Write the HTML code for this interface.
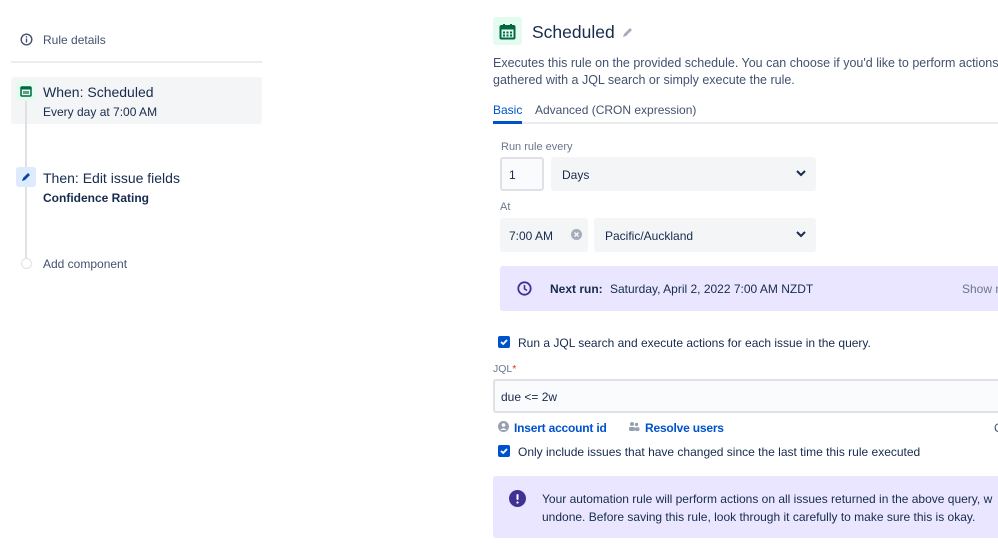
<!DOCTYPE html>
<html><head><style>
*{margin:0;padding:0;box-sizing:border-box}
body{width:998px;height:546px;overflow:hidden;background:#fff;font-family:"Liberation Sans",sans-serif;color:#172b4d;position:relative;font-size:13px}
.a{position:absolute;white-space:nowrap}
.box{position:absolute;background:#f4f5f7;border-radius:3px}
.chk{position:absolute;width:12px;height:12px;background:#0052cc;border-radius:2px}
.chk svg{position:absolute;left:1px;top:1px}
</style></head><body>
<svg class="a" style="left:20px;top:33px" width="13" height="13" viewBox="0 0 13 13"><circle cx="6.5" cy="6.5" r="5.3" fill="none" stroke="#42526e" stroke-width="1.4"/><rect x="5.8" y="5.5" width="1.4" height="4" fill="#42526e"/><rect x="5.8" y="3.2" width="1.4" height="1.4" fill="#42526e"/></svg>
<div class="a" style="left:43px;top:33px;font-size:12px;color:#42526e">Rule details</div>
<div class="a" style="left:11px;top:61px;width:251px;height:2px;background:#ebecf0"></div>
<div class="box" style="left:11px;top:77px;width:251px;height:47px"></div>
<div class="a" style="left:25px;top:100px;width:2px;height:158px;background:#dfe1e6"></div>
<div class="a" style="left:16px;top:81px;width:20px;height:20px;background:#e3fcef;border-radius:3px"></div>
<svg class="a" style="left:20px;top:85px" width="12" height="12" viewBox="0 0 12 12"><rect x="1" y="2" width="10" height="9" rx="1" fill="none" stroke="#006644" stroke-width="1.5"/><rect x="1" y="2" width="10" height="2.5" fill="#006644"/><rect x="3" y="6" width="6" height="3" fill="#006644" opacity=".6"/></svg>
<div class="a" style="left:43px;top:84px;font-size:14px">When: Scheduled</div>
<div class="a" style="left:43px;top:105px;font-size:12px;color:#172b4d">Every day at 7:00 AM</div>
<div class="a" style="left:16px;top:167px;width:20px;height:20px;background:#deebff;border-radius:3px"></div>
<svg class="a" style="left:20px;top:171px" width="12" height="12" viewBox="0 0 12 12"><path d="M2 10 L3 7 L8 2 L10 4 L5 9 Z" fill="#0747a6"/></svg>
<div class="a" style="left:43px;top:170px;font-size:14px">Then: Edit issue fields</div>
<div class="a" style="left:43px;top:191px;font-size:12px;font-weight:bold">Confidence Rating</div>
<div class="a" style="left:21px;top:258px;width:11px;height:11px;border:1px solid #dfe1e6;border-radius:50%;background:#fff"></div>
<div class="a" style="left:43px;top:257px;font-size:12px;color:#42526e">Add component</div>
<div class="a" style="left:493px;top:17px;width:29px;height:28px;background:#e3fcef;border-radius:3px"></div>
<svg class="a" style="left:499px;top:23px" width="17" height="17" viewBox="0 0 17 17"><rect x="1.5" y="3" width="14" height="12.5" rx="1" fill="none" stroke="#006644" stroke-width="2"/><rect x="1.5" y="3" width="14" height="3.5" fill="#006644"/><rect x="4" y="1" width="2" height="3" fill="#006644"/><rect x="11" y="1" width="2" height="3" fill="#006644"/><g fill="#006644"><rect x="4" y="8.5" width="2" height="2"/><rect x="7.5" y="8.5" width="2" height="2"/><rect x="11" y="8.5" width="2" height="2"/><rect x="4" y="11.5" width="2" height="2"/><rect x="7.5" y="11.5" width="2" height="2"/><rect x="11" y="11.5" width="2" height="2"/></g></svg>
<div class="a" style="left:532px;top:22px;font-size:17.5px">Scheduled</div>
<svg class="a" style="left:622px;top:26px" width="12" height="12" viewBox="0 0 12 12"><path d="M1 11 L2 8 L8 2 L10 4 L4 10 Z" fill="#a5adba"/></svg>
<div class="a" style="left:493px;top:56px;font-size:12.5px;color:#42526e">Executes this rule on the provided schedule. You can choose if you'd like to perform actions on</div>
<div class="a" style="left:493px;top:73px;font-size:12.5px;color:#42526e">gathered with a JQL search or simply execute the rule.</div>
<div class="a" style="left:493px;top:103px;font-size:12px;color:#0052cc">Basic</div>
<div class="a" style="left:535px;top:103px;font-size:12px;color:#42526e">Advanced (CRON expression)</div>
<div class="a" style="left:493px;top:122px;width:505px;height:2px;background:#ebecf0"></div>
<div class="a" style="left:493px;top:121px;width:29px;height:3px;background:#0052cc"></div>
<div class="a" style="left:501px;top:141px;font-size:11px;color:#6b778c">Run rule every</div>
<div class="a" style="left:500px;top:157px;width:44px;height:34px;border:2px solid #dfe1e6;border-radius:3px;background:#fafbfc"></div>
<div class="a" style="left:509px;top:168px;font-size:12px">1</div>
<div class="box" style="left:551px;top:157px;width:265px;height:34px"></div>
<div class="a" style="left:562px;top:168px;font-size:12px">Days</div>
<svg class="a" style="left:795px;top:169px" width="12" height="9" viewBox="0 0 12 9"><path d="M2 2 L6 6 L10 2" fill="none" stroke="#172b4d" stroke-width="2"/></svg>
<div class="a" style="left:500px;top:201px;font-size:11px;color:#6b778c">At</div>
<div class="box" style="left:500px;top:218px;width:88px;height:34px"></div>
<div class="a" style="left:509px;top:229px;font-size:12px">7:00 AM</div>
<svg class="a" style="left:571px;top:229px" width="11" height="11" viewBox="0 0 11 11"><circle cx="5.5" cy="5.5" r="5.5" fill="#a5adba"/><path d="M3.5 3.5 L7.5 7.5 M7.5 3.5 L3.5 7.5" stroke="#f4f5f7" stroke-width="1.5"/></svg>
<div class="box" style="left:594px;top:218px;width:222px;height:34px"></div>
<div class="a" style="left:605px;top:229px;font-size:12px">Pacific/Auckland</div>
<svg class="a" style="left:795px;top:230px" width="12" height="9" viewBox="0 0 12 9"><path d="M2 2 L6 6 L10 2" fill="none" stroke="#172b4d" stroke-width="2"/></svg>
<div class="a" style="left:500px;top:266px;width:498px;height:45px;background:#eae6ff;border-radius:3px 0 0 3px"></div>
<svg class="a" style="left:517px;top:281px" width="15" height="15" viewBox="0 0 15 15"><circle cx="7.5" cy="7.5" r="6.2" fill="none" stroke="#403294" stroke-width="1.8"/><path d="M7.5 4 V7.8 L10 9.5" fill="none" stroke="#403294" stroke-width="1.6"/></svg>
<div class="a" style="left:550px;top:282px;font-size:12px;font-weight:bold">Next run:</div>
<div class="a" style="left:610px;top:282px;font-size:12px">Saturday, April 2, 2022 7:00 AM NZDT</div>
<div class="a" style="left:962px;top:282px;font-size:12px;color:#6b778c">Show m</div>
<div class="chk" style="left:498px;top:336px"><svg width="10" height="10" viewBox="0 0 10 10"><path d="M2 5 L4.2 7 L8 3" fill="none" stroke="#fff" stroke-width="1.8"/></svg></div>
<div class="a" style="left:518px;top:336px;font-size:12px">Run a JQL search and execute actions for each issue in the query.</div>
<div class="a" style="left:493px;top:363px;font-size:10.5px;color:#6b778c">JQL<span style="color:#de350b">*</span></div>
<div class="a" style="left:493px;top:379px;width:510px;height:34px;border:2px solid #dfe1e6;border-radius:3px;background:#fafbfc"></div>
<div class="a" style="left:501px;top:390px;font-size:12px">due &lt;= 2w</div>
<svg class="a" style="left:498px;top:421px" width="11" height="11" viewBox="0 0 11 11"><circle cx="5.5" cy="5.5" r="5.5" fill="#97a0af"/><circle cx="5.5" cy="4" r="1.8" fill="#fff"/><path d="M2.3 9 Q5.5 5.5 8.7 9" fill="#fff"/></svg>
<div class="a" style="left:514px;top:421px;font-size:12px;color:#0052cc;font-weight:bold;letter-spacing:-0.2px">Insert account id</div>
<svg class="a" style="left:628px;top:421px" width="12" height="10" viewBox="0 0 12 10"><circle cx="4" cy="3" r="2" fill="#97a0af"/><circle cx="8.5" cy="3.5" r="1.7" fill="#97a0af"/><rect x="1" y="6" width="6" height="4" rx="1.5" fill="#97a0af"/><rect x="7" y="6.3" width="4.5" height="3.7" rx="1.5" fill="#97a0af"/></svg>
<div class="a" style="left:645px;top:421px;font-size:12px;color:#0052cc;font-weight:bold;letter-spacing:-0.2px">Resolve users</div>
<div class="a" style="left:994px;top:421px;font-size:12px;color:#42526e">C</div>
<div class="chk" style="left:498px;top:445px"><svg width="10" height="10" viewBox="0 0 10 10"><path d="M2 5 L4.2 7 L8 3" fill="none" stroke="#fff" stroke-width="1.8"/></svg></div>
<div class="a" style="left:518px;top:445px;font-size:12px">Only include issues that have changed since the last time this rule executed</div>
<div class="a" style="left:493px;top:476px;width:505px;height:62px;background:#eae6ff;border-radius:3px 0 0 3px"></div>
<svg class="a" style="left:509px;top:490px" width="17" height="17" viewBox="0 0 17 17"><circle cx="8.5" cy="8.5" r="8.5" fill="#403294"/><rect x="7.5" y="4" width="2" height="6" rx="1" fill="#fff"/><circle cx="8.5" cy="12.5" r="1.1" fill="#fff"/></svg>
<div class="a" style="left:542px;top:492px;font-size:12px;color:#172b4d">Your automation rule will perform actions on all issues returned in the above query, w</div>
<div class="a" style="left:542px;top:510px;font-size:12px;color:#172b4d">undone. Before saving this rule, look through it carefully to make sure this is okay.</div>
</body></html>
